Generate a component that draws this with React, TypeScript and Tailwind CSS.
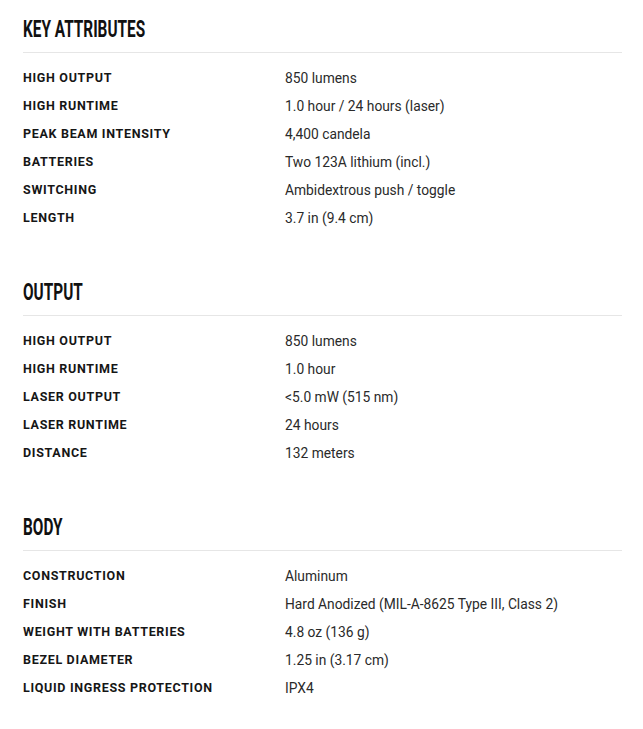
import React from 'react';

interface Spec {
  label: string;
  value: string;
}

interface Section {
  title: string;
  specs: Spec[];
}

const sections: Section[] = [
  {
    title: 'KEY ATTRIBUTES',
    specs: [
      { label: 'HIGH OUTPUT', value: '850 lumens' },
      { label: 'HIGH RUNTIME', value: '1.0 hour / 24 hours (laser)' },
      { label: 'PEAK BEAM INTENSITY', value: '4,400 candela' },
      { label: 'BATTERIES', value: 'Two 123A lithium (incl.)' },
      { label: 'SWITCHING', value: 'Ambidextrous push / toggle' },
      { label: 'LENGTH', value: '3.7 in (9.4 cm)' },
    ],
  },
  {
    title: 'OUTPUT',
    specs: [
      { label: 'HIGH OUTPUT', value: '850 lumens' },
      { label: 'HIGH RUNTIME', value: '1.0 hour' },
      { label: 'LASER OUTPUT', value: '<5.0 mW (515 nm)' },
      { label: 'LASER RUNTIME', value: '24 hours' },
      { label: 'DISTANCE', value: '132 meters' },
    ],
  },
  {
    title: 'BODY',
    specs: [
      { label: 'CONSTRUCTION', value: 'Aluminum' },
      { label: 'FINISH', value: 'Hard Anodized (MIL-A-8625 Type III, Class 2)' },
      { label: 'WEIGHT WITH BATTERIES', value: '4.8 oz (136 g)' },
      { label: 'BEZEL DIAMETER', value: '1.25 in (3.17 cm)' },
      { label: 'LIQUID INGRESS PROTECTION', value: 'IPX4' },
    ],
  },
];

const SpecSection: React.FC<{ section: Section }> = ({ section }) => (
  <div>
    <h2 className="text-[24px] leading-[30px] font-bold text-[#111] pb-[8px] border-b border-[#e6e6e6] font-['Roboto',sans-serif]">
      {/* condensed display face, squeezed */}
      <span className="inline-block origin-left scale-x-[0.64] whitespace-nowrap">{section.title}</span>
    </h2>
    <div className="mt-[11px]">
      {section.specs.map((spec) => (
        <div key={spec.label} className="flex h-[28px] items-center">
          <span className="w-[262px] shrink-0 text-[12.5px] font-bold tracking-[0.055em] text-[#161616] font-['Roboto',sans-serif]">
            {spec.label}
          </span>
          <span className="text-[13.8px] text-[#2a2a2a] font-['Roboto',sans-serif]">{spec.value}</span>
        </div>
      ))}
    </div>
  </div>
);

export default function App() {
  return (
    <div className="bg-white w-[643px] min-h-[729px] pl-[23px] pr-[21px] pt-[14px] flex flex-col gap-[45px]">
      {sections.map((section) => (
        <SpecSection key={section.title} section={section} />
      ))}
    </div>
  );
}
